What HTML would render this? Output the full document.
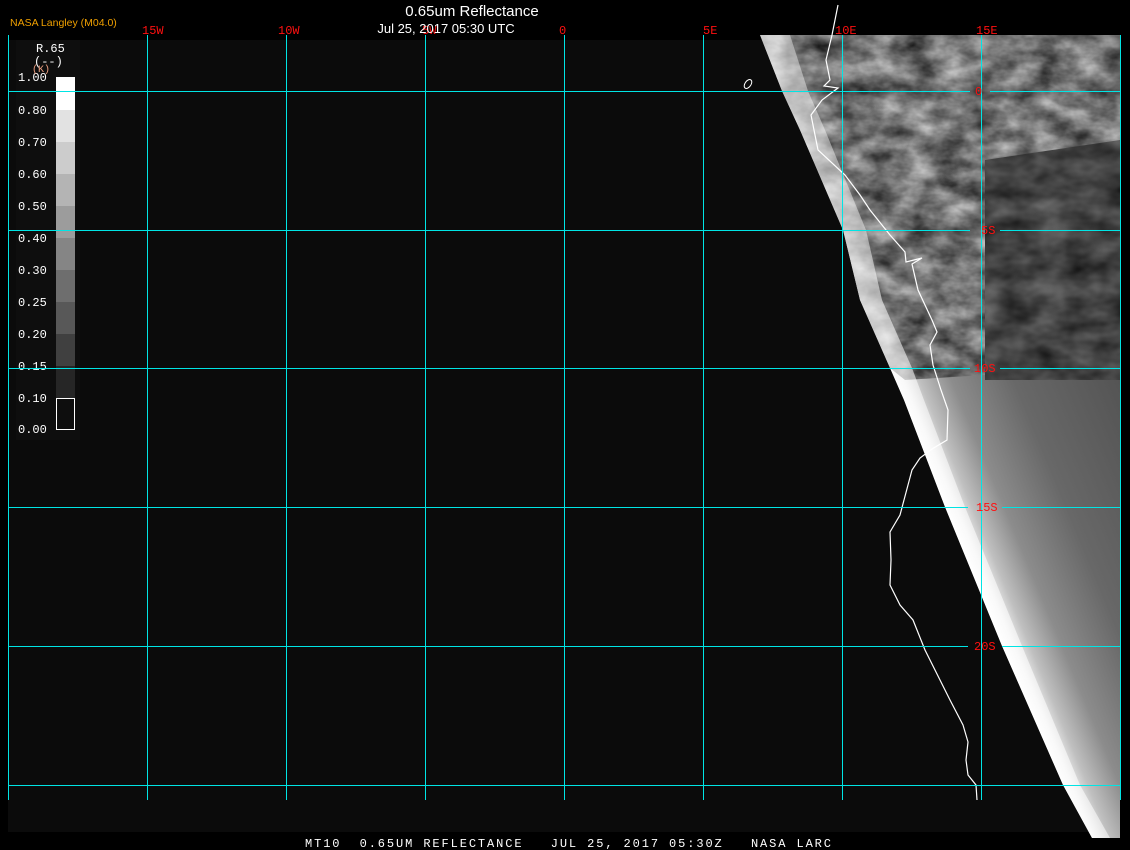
<!DOCTYPE html>
<html><head><meta charset="utf-8"><style>
html,body{margin:0;padding:0;background:#000;}
body{width:1130px;height:850px;position:relative;overflow:hidden;font-family:"Liberation Sans",sans-serif;}
svg{position:absolute;left:0;top:0;}
</style></head><body>
<svg width="1130" height="850" viewBox="0 0 1130 850" xmlns="http://www.w3.org/2000/svg">
<defs>
<filter id="mot" x="0" y="0" width="100%" height="100%" color-interpolation-filters="sRGB">
<feTurbulence type="fractalNoise" baseFrequency="0.03 0.05" numOctaves="4" seed="3"/>
<feColorMatrix type="matrix" values="0.85 0 0 0 0.02  0.85 0 0 0 0.02  0.85 0 0 0 0.02  0 0 0 0 1"/>
</filter>
<filter id="mot2" x="0" y="0" width="100%" height="100%" color-interpolation-filters="sRGB">
<feTurbulence type="fractalNoise" baseFrequency="0.03 0.05" numOctaves="3" seed="11"/>
<feColorMatrix type="matrix" values="0.4 0 0 0 0.06  0.4 0 0 0 0.06  0.4 0 0 0 0.06  0 0 0 0 1"/>
</filter>
<linearGradient id="coast" gradientUnits="userSpaceOnUse" x1="945" y1="507" x2="1176" y2="411">
<stop offset="0" stop-color="#ffffff"/>
<stop offset="0.04" stop-color="#eeeeee"/>
<stop offset="0.1" stop-color="#c0c0c0"/>
<stop offset="0.22" stop-color="#8c8c8c"/>
<stop offset="0.45" stop-color="#686868"/>
<stop offset="1" stop-color="#4c4c4c"/>
</linearGradient>
<linearGradient id="edgeW" gradientUnits="userSpaceOnUse" x1="800" y1="130" x2="860" y2="105">
<stop offset="0" stop-color="#fff" stop-opacity="0.95"/>
<stop offset="1" stop-color="#fff" stop-opacity="0"/>
</linearGradient>
<clipPath id="land"><polygon points="760,35 782,91 800,130 843,230 860,300 890,368 904,400 945,507 1002,646 1063,785 1092,838 1120,838 1120,35"/></clipPath>
<clipPath id="cloud"><polygon points="760,35 1120,35 1120,150 985,165 985,375 905,380 890,368 860,300 843,230 800,130 782,91"/></clipPath>
<clipPath id="dark"><polygon points="985,160 1120,140 1120,380 985,380"/></clipPath>
</defs>
<rect x="0" y="0" width="1130" height="850" fill="#000"/>
<rect x="8" y="40" width="1112" height="792" fill="#0b0b0b"/>
<g clip-path="url(#land)">
<rect x="740" y="35" width="390" height="810" fill="url(#coast)"/>
<g clip-path="url(#cloud)"><rect x="760" y="35" width="360" height="350" filter="url(#mot)"/></g>
<g clip-path="url(#dark)"><rect x="985" y="140" width="135" height="245" filter="url(#mot2)"/></g>
<polygon points="760,35 782,91 800,130 843,230 860,300 890,368 904,400 945,507 1002,646 1063,785 1092,838 1110,838 1080,785 1022,646 965,507 924,400 912,368 882,300 866,230 825,130 808,91 790,35" fill="url(#edgeW)" opacity="0.7"/>
</g>
<polyline fill="none" stroke="#fff" stroke-width="1.2" points="838,5 832,35 826,60 830,80 824,86 838,88 822,100 811,115 818,150 845,175 860,195 870,210 890,235 905,252 906,262 922,258 912,264 918,290 932,320 937,332 930,345 933,365 941,390 948,410 947,440 932,449 920,458 912,470 908,485 900,515 890,532 891,560 890,585 900,605 913,620 925,650 935,670 950,700 963,725 968,742 966,760 968,775 976,785 977,800"/>
<ellipse cx="748" cy="84" rx="3" ry="5" transform="rotate(35 748 84)" fill="none" stroke="#fff" stroke-width="1"/>
<g stroke="#00e5e5" stroke-width="1">
<line x1="8.5" y1="35" x2="8.5" y2="800"/>
<line x1="147.5" y1="35" x2="147.5" y2="800"/>
<line x1="286.5" y1="35" x2="286.5" y2="800"/>
<line x1="425.5" y1="35" x2="425.5" y2="800"/>
<line x1="564.5" y1="35" x2="564.5" y2="800"/>
<line x1="703.5" y1="35" x2="703.5" y2="800"/>
<line x1="842.5" y1="35" x2="842.5" y2="800"/>
<line x1="981.5" y1="35" x2="981.5" y2="800"/>
<line x1="1120.5" y1="35" x2="1120.5" y2="800"/>
<line x1="8" y1="91.5" x2="970" y2="91.5"/><line x1="990" y1="91.5" x2="1120" y2="91.5"/>
<line x1="8" y1="230.5" x2="970" y2="230.5"/><line x1="1000" y1="230.5" x2="1120" y2="230.5"/>
<line x1="8" y1="368.5" x2="970" y2="368.5"/><line x1="1000" y1="368.5" x2="1120" y2="368.5"/>
<line x1="8" y1="507.5" x2="968" y2="507.5"/><line x1="1002" y1="507.5" x2="1120" y2="507.5"/>
<line x1="8" y1="646.5" x2="968" y2="646.5"/><line x1="1002" y1="646.5" x2="1120" y2="646.5"/>
<line x1="8" y1="785.5" x2="1120" y2="785.5"/>
</g>
<g fill="#ff1010" font-family="Liberation Mono, monospace" font-size="12">
<text x="142" y="34">15W</text><text x="278" y="34">10W</text><text x="422" y="34">5W</text>
<text x="559" y="34">0</text><text x="703" y="34">5E</text><text x="835" y="34">10E</text><text x="976" y="34">15E</text>
<text x="975" y="95">0</text><text x="981" y="234">5S</text><text x="974" y="372">10S</text>
<text x="976" y="511">15S</text><text x="974" y="650">20S</text>
</g>
<rect x="16" y="40" width="64" height="400" fill="#0e0e0e"/>
<g font-family="Liberation Mono, monospace" font-size="12" fill="#fff">
<text x="36" y="52">R.65</text><text x="34" y="65">(--)</text>
<text x="18" y="81">1.00</text><text x="18" y="114">0.80</text><text x="18" y="146">0.70</text>
<text x="18" y="178">0.60</text><text x="18" y="210">0.50</text><text x="18" y="242">0.40</text>
<text x="18" y="274">0.30</text><text x="18" y="306">0.25</text><text x="18" y="338">0.20</text>
<text x="18" y="370">0.15</text><text x="18" y="402">0.10</text><text x="18" y="433">0.00</text>
</g>
<text x="32" y="72" font-family="Liberation Mono, monospace" font-size="10" fill="#f0a080">(K)</text>
<g>
<rect x="56" y="77" width="19" height="33" fill="#fff"/>
<rect x="56" y="110" width="19" height="32" fill="#e2e2e2"/>
<rect x="56" y="142" width="19" height="32" fill="#cccccc"/>
<rect x="56" y="174" width="19" height="32" fill="#b4b4b4"/>
<rect x="56" y="206" width="19" height="32" fill="#9c9c9c"/>
<rect x="56" y="238" width="19" height="32" fill="#858585"/>
<rect x="56" y="270" width="19" height="32" fill="#6e6e6e"/>
<rect x="56" y="302" width="19" height="32" fill="#585858"/>
<rect x="56" y="334" width="19" height="32" fill="#404040"/>
<rect x="56" y="366" width="19" height="32" fill="#262626"/>
<rect x="56.5" y="398.5" width="18" height="31" fill="#0e0e0e" stroke="#fff"/>
</g>
<g stroke="#00e5e5"><line x1="8" y1="91.5" x2="80" y2="91.5"/><line x1="8" y1="230.5" x2="80" y2="230.5"/><line x1="8" y1="368.5" x2="80" y2="368.5"/></g>
<text x="472" y="16" text-anchor="middle" font-size="15" fill="#fff">0.65um Reflectance</text>
<text x="446" y="33" text-anchor="middle" font-size="13" fill="#fff">Jul 25, 2017 05:30 UTC</text>
<text x="10" y="26" font-size="10.5" fill="#f0a000">NASA Langley (M04.0)</text>
<text x="305" y="847" font-family="Liberation Mono, monospace" font-size="12" letter-spacing="1.9" fill="#fff" xml:space="preserve">MT10  0.65UM REFLECTANCE   JUL 25, 2017 05:30Z   NASA LARC</text>
</svg>
</body></html>
